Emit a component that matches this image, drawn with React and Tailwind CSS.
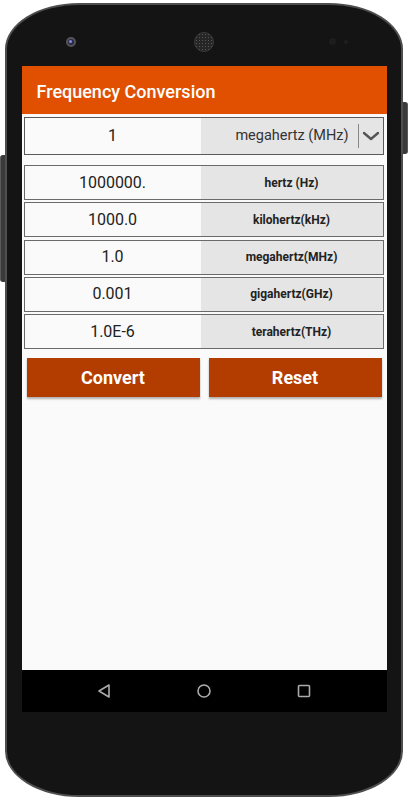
import React from 'react'

const rows = [
  { value: '1000000.', unit: 'hertz (Hz)' },
  { value: '1000.0', unit: 'kilohertz(kHz)' },
  { value: '1.0', unit: 'megahertz(MHz)' },
  { value: '0.001', unit: 'gigahertz(GHz)' },
  { value: '1.0E-6', unit: 'terahertz(THz)' },
]

const ResultRow = ({ value, unit }) => (
  <div className="flex h-[35px] border-[1.5px] border-[#6a6a6a]">
    <div className="w-[176px] flex items-center justify-center bg-[#fafafa] text-[16px] text-[#222]">
      {value}
    </div>
    <div className="flex-1 flex items-center justify-center bg-[#e5e5e5] text-[12px] font-bold text-[#222]">
      {unit}
    </div>
  </div>
)

const App = () => {
  return (
    <div className="w-[408px] h-[800px] bg-white relative overflow-hidden" style={{ fontFamily: 'Roboto, "Noto Sans", sans-serif' }}>
      {/* side buttons */}
      <div className="absolute left-0 top-[155px] w-[6px] h-[127px] rounded-l-[3px] bg-[#3a3a3a] border-l border-[#5a5a5a]"></div>
      <div className="absolute right-0 top-[102px] w-[6px] h-[52px] rounded-r-[3px] bg-[#3a3a3a] border-r border-[#5a5a5a]"></div>

      <div className="relative ml-[5px] mt-[3px] w-[398px] h-[794px] rounded-[74px/46px] bg-[#141414] border-2 border-[#4e4e4e] flex flex-col items-center">
        {/* top bezel */}
        <div className="w-full h-[61px] relative">
          <div className="absolute left-[59px] top-[32px] w-[10px] h-[10px] rounded-full bg-[#2a2a4a] border-2 border-[#555]">
            <div className="w-[3px] h-[3px] rounded-full bg-[#8a8ae0] ml-[1px] mt-[1px]"></div>
          </div>
          <div className="absolute left-[187px] top-[27px] w-[20px] h-[20px] rounded-full bg-[#262626] border border-[#3a3a3a]" style={{ backgroundImage: 'radial-gradient(#555 1px, transparent 1px)', backgroundSize: '3px 3px' }}></div>
          <div className="absolute left-[322px] top-[33px] w-[7px] h-[7px] rounded-full bg-[#1d1d1d]"></div>
          <div className="absolute left-[337px] top-[35px] w-[4px] h-[4px] rounded-full bg-[#1f1f1f]"></div>
        </div>

        {/* screen */}
        <div className="w-[365px] h-[646px] flex flex-col">
          <div className="h-[48px] bg-[#e05000] flex items-center pl-[15px] pt-[2px]">
            <span className="text-white text-[18px] font-medium">Frequency Conversion</span>
          </div>

          <div className="flex-1 bg-[#fafafa] flex flex-col px-[2px] pt-[3px]">
            <div className="flex h-[38px] border-[1.5px] border-[#5a5a5a] mr-[1px]">
              <div className="w-[176px] flex items-center justify-center bg-[#fafafa] text-[16px] text-[#222]">1</div>
              <div className="flex-1 flex items-center justify-end bg-[#e5e5e5] text-[14.5px] text-[#333]">
                <span className="mr-[9px]">megahertz (MHz)</span>
                <div className="w-px h-[24px] bg-[#888]"></div>
                <svg className="w-[18px] h-[12px] mx-[3px]" viewBox="0 0 18 12" fill="none" stroke="#555" strokeWidth="2.4" strokeLinecap="round" strokeLinejoin="round">
                  <path d="M2 3 L9 9 L16 3" />
                </svg>
              </div>
            </div>

            <div className="flex flex-col gap-[2.3px] mt-[10px] mr-[1px]">
              {rows.map((r) => (
                <ResultRow key={r.unit} value={r.value} unit={r.unit} />
              ))}
            </div>

            <div className="flex gap-[9px] px-[3px] mt-[9px]">
              <button className="flex-1 h-[39px] bg-[#b33c00] text-white text-[18px] font-bold shadow-[0_2px_2px_rgba(0,0,0,0.3)]">Convert</button>
              <button className="flex-1 h-[39px] bg-[#b33c00] text-white text-[18px] font-bold shadow-[0_2px_2px_rgba(0,0,0,0.3)]">Reset</button>
            </div>
          </div>

          <div className="h-[42px] bg-black flex items-center justify-center gap-[82px]">
            <svg className="w-[18px] h-[18px]" viewBox="0 0 18 18" fill="none" stroke="#aaa" strokeWidth="1.6" strokeLinejoin="round">
              <path d="M14 3 L4 9 L14 15 Z" />
            </svg>
            <svg className="w-[18px] h-[18px]" viewBox="0 0 18 18" fill="none" stroke="#aaa" strokeWidth="1.6">
              <circle cx="9" cy="9" r="6" />
            </svg>
            <svg className="w-[18px] h-[18px]" viewBox="0 0 18 18" fill="none" stroke="#aaa" strokeWidth="1.6">
              <rect x="3.5" y="3.5" width="11" height="11" rx="1" />
            </svg>
          </div>
        </div>
      </div>
    </div>
  )
}

export default App
